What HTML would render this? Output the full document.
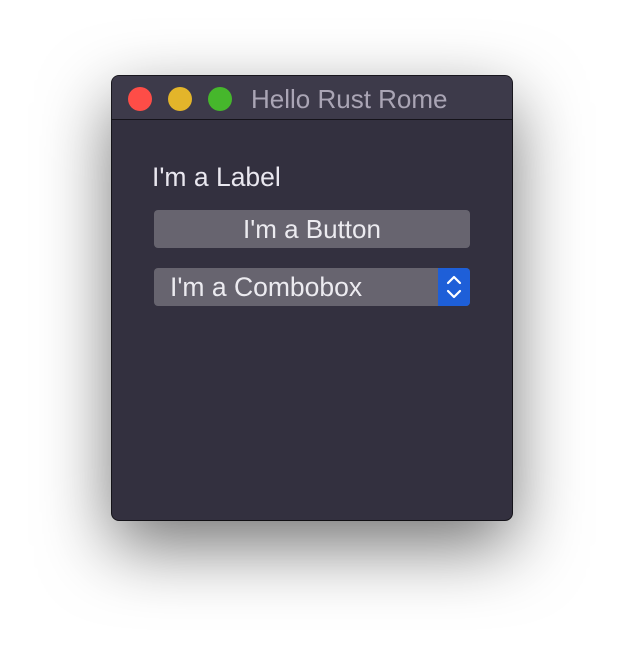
<!DOCTYPE html>
<html><head><meta charset="utf-8"><style>
html,body{margin:0;padding:0;width:624px;height:668px;background:#fff;overflow:hidden;font-family:"Liberation Sans",sans-serif}
.win{position:absolute;left:112px;top:76px;width:400px;height:444px;background:#33303f;border-radius:7px;box-shadow:0 26px 70px rgba(0,0,0,.55),0 0 0 1px #1c1a22;overflow:hidden}
.tb{position:absolute;left:0;top:0;width:400px;height:43px;background:#3d3a4a;border-bottom:1px solid #15131a}
.c{position:absolute;top:11px;width:24px;height:24px;border-radius:50%}
.t{position:absolute;left:139px;top:8px;font-size:26px;color:#aaa5b5}
.lbl{position:absolute;left:40px;top:86px;font-size:26.5px;color:#e9e7ef}
.btn{position:absolute;left:42px;top:134px;width:316px;height:38px;background:#67646f;border-radius:4px;color:#ecebf0;font-size:26px;text-align:center;line-height:38px}
.cb{position:absolute;left:42px;top:192px;width:316px;height:38px;background:#67646f;border-radius:4px;color:#ecebf0;font-size:26.5px;line-height:38px;overflow:hidden}
.cb span{position:absolute;left:16px}
.ar{position:absolute;right:0;top:0;width:32px;height:38px;background:#1e5fd8}
</style></head><body>
<div class="win">
<div class="tb">
<div class="c" style="left:16px;background:#fe4d47"></div>
<div class="c" style="left:56px;background:#e3b52a"></div>
<div class="c" style="left:96px;background:#46b72c"></div>
<div class="t">Hello Rust Rome</div>
</div>
<div class="lbl">I'm a Label</div>
<div class="btn">I'm a Button</div>
<div class="cb"><span>I'm a Combobox</span><div class="ar"><svg width="32" height="38" viewBox="0 0 32 38"><path d="M10 15 L16 9 L22 15 M10 23 L16 29 L22 23" fill="none" stroke="#fff" stroke-width="2.2" stroke-linecap="round" stroke-linejoin="round"/></svg></div></div>
</div>
</body></html>
